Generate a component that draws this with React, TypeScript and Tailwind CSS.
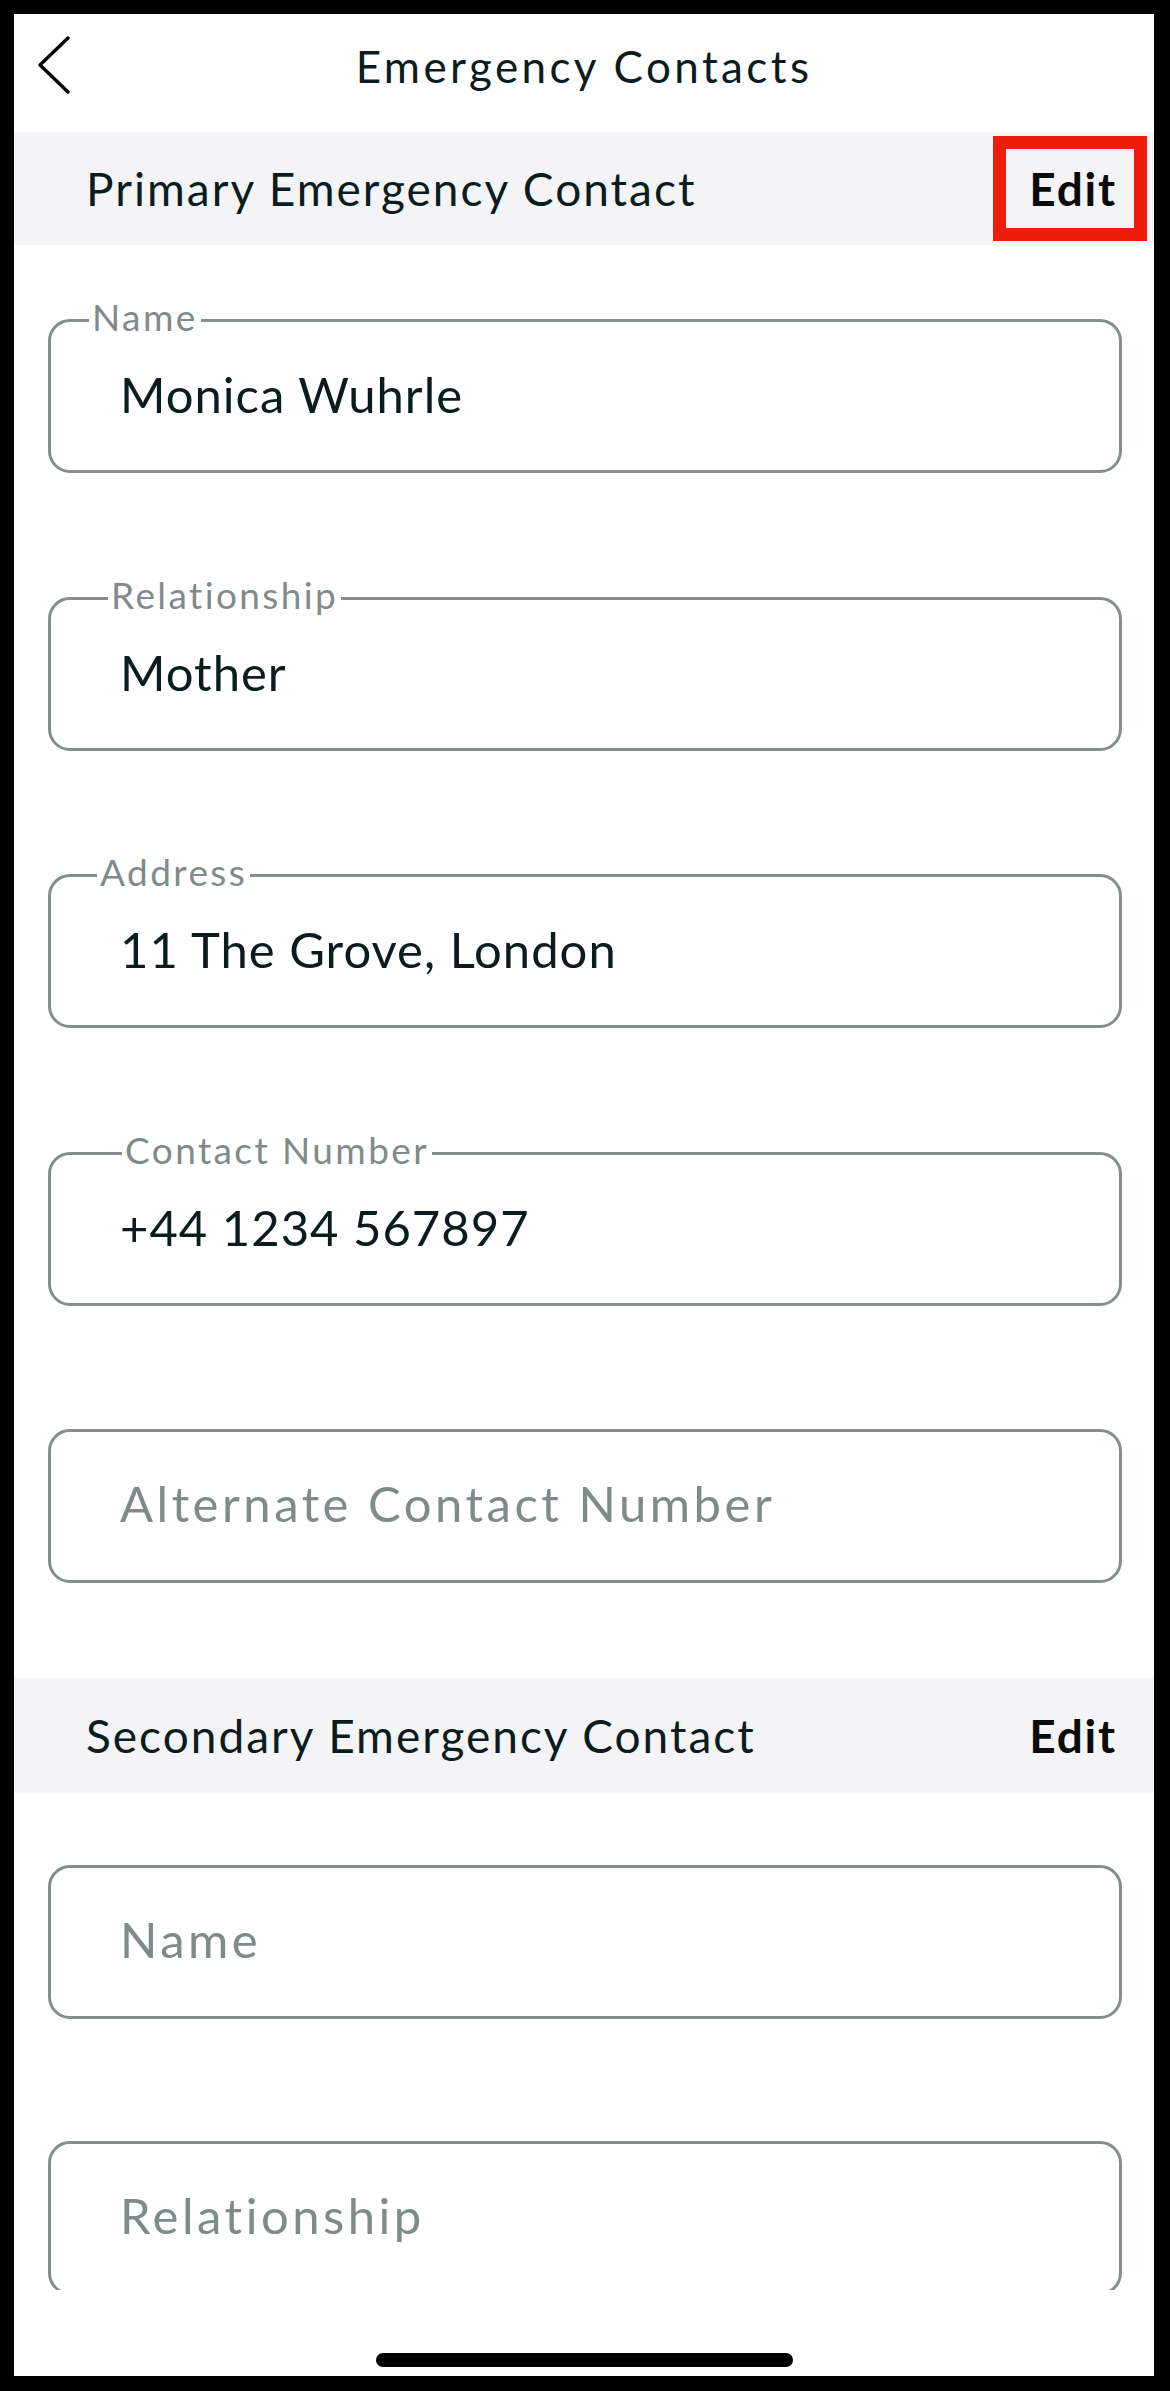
type Field = {
  label: string;
  value?: string;
  labelLeft?: string;
};

const primaryFields: Field[] = [
  { label: 'Name', value: 'Monica Wuhrle', labelLeft: 'left-[38px]' },
  { label: 'Relationship', value: 'Mother', labelLeft: 'left-[57px]' },
  { label: 'Address', value: '11 The Grove, London', labelLeft: 'left-[46px]' },
  { label: 'Contact Number', value: '+44 1234 567897', labelLeft: 'left-[71px]' },
  { label: 'Alternate Contact Number' },
];

const secondaryFields: Field[] = [{ label: 'Name' }, { label: 'Relationship' }];

function InputBox({ field }: { field: Field }) {
  const filled = field.value !== undefined;

  return (
    <div className="relative ml-[34px] mr-[32px] h-[154px] shrink-0 rounded-[22px] border-[3px] border-[#848e8e] flex items-center pl-[69px]">
      {filled && (
        <span
          className={`absolute -top-[27px] ${field.labelLeft} bg-white px-[3px] text-[37px] leading-[44px] text-[#7f8b8b] tracking-[2.4px]`}
        >
          {field.label}
        </span>
      )}
      {filled ? (
        <span className="text-[49px] leading-none tracking-[1px] pb-[3px] text-[#0b1c1e]">{field.value}</span>
      ) : (
        <span className="text-[49px] leading-none tracking-[3.5px] pb-[5px] text-[#7f8b8b]">{field.label}</span>
      )}
    </div>
  );
}

function SectionHeader({ title, highlight, tall }: { title: string; highlight?: boolean; tall?: boolean }) {
  return (
    <div
      className={`${tall ? 'h-[115px]' : 'h-[113px]'} shrink-0 bg-[#f4f4f6] flex items-stretch justify-between pl-[72px] pr-[37px]`}
    >
      <span className="self-center text-[46px] tracking-[2px] text-[#0b1c1e]">{title}</span>
      <div className="relative flex items-center">
        <button className="text-[46px] font-bold tracking-[1.8px] text-[#0a0a0a]">Edit</button>
        {highlight && (
          <span className="absolute top-[4px] bottom-[4px] -left-[36px] -right-[30px] border-[13px] border-[#ee1c0a]" />
        )}
      </div>
    </div>
  );
}

export default function App() {
  return (
    <div
      className="w-[1170px] h-[2391px] bg-white border-[14px] border-r-[16px] border-b-[15px] border-black flex flex-col overflow-hidden"
      style={{ fontFamily: 'Lato, "Noto Sans", sans-serif' }}
    >
      <div className="h-[2276px] shrink-0 overflow-hidden flex flex-col">
        {/* top bar */}
        <div className="relative h-[118px] shrink-0 flex items-center justify-center pb-[14px]">
          <button className="absolute left-[23px] top-[21px]">
            <svg width="34" height="60" viewBox="0 0 34 60" fill="none">
              <polyline
                points="31,3 3,30 31,57"
                stroke="#000"
                strokeWidth="3.4"
                strokeLinecap="round"
                strokeLinejoin="round"
              />
            </svg>
          </button>
          <h1 className="text-[44px] tracking-[3.4px] text-[#0b1c1e]">Emergency Contacts</h1>
        </div>

        <SectionHeader title="Primary Emergency Contact" highlight />

        <div className="mt-[74px] flex flex-col gap-[123.5px]">
          {primaryFields.map((f) => (
            <InputBox key={f.label} field={f} />
          ))}
        </div>

        <div className="mt-[95px]">
          <SectionHeader title="Secondary Emergency Contact" tall />
        </div>

        <div className="mt-[72px] flex flex-col gap-[122px]">
          {secondaryFields.map((f) => (
            <InputBox key={f.label} field={f} />
          ))}
        </div>
      </div>

      {/* home indicator */}
      <div className="flex-1 flex justify-center pt-[63px]">
        <div className="w-[417px] h-[14px] rounded-full bg-black" />
      </div>
    </div>
  );
}
